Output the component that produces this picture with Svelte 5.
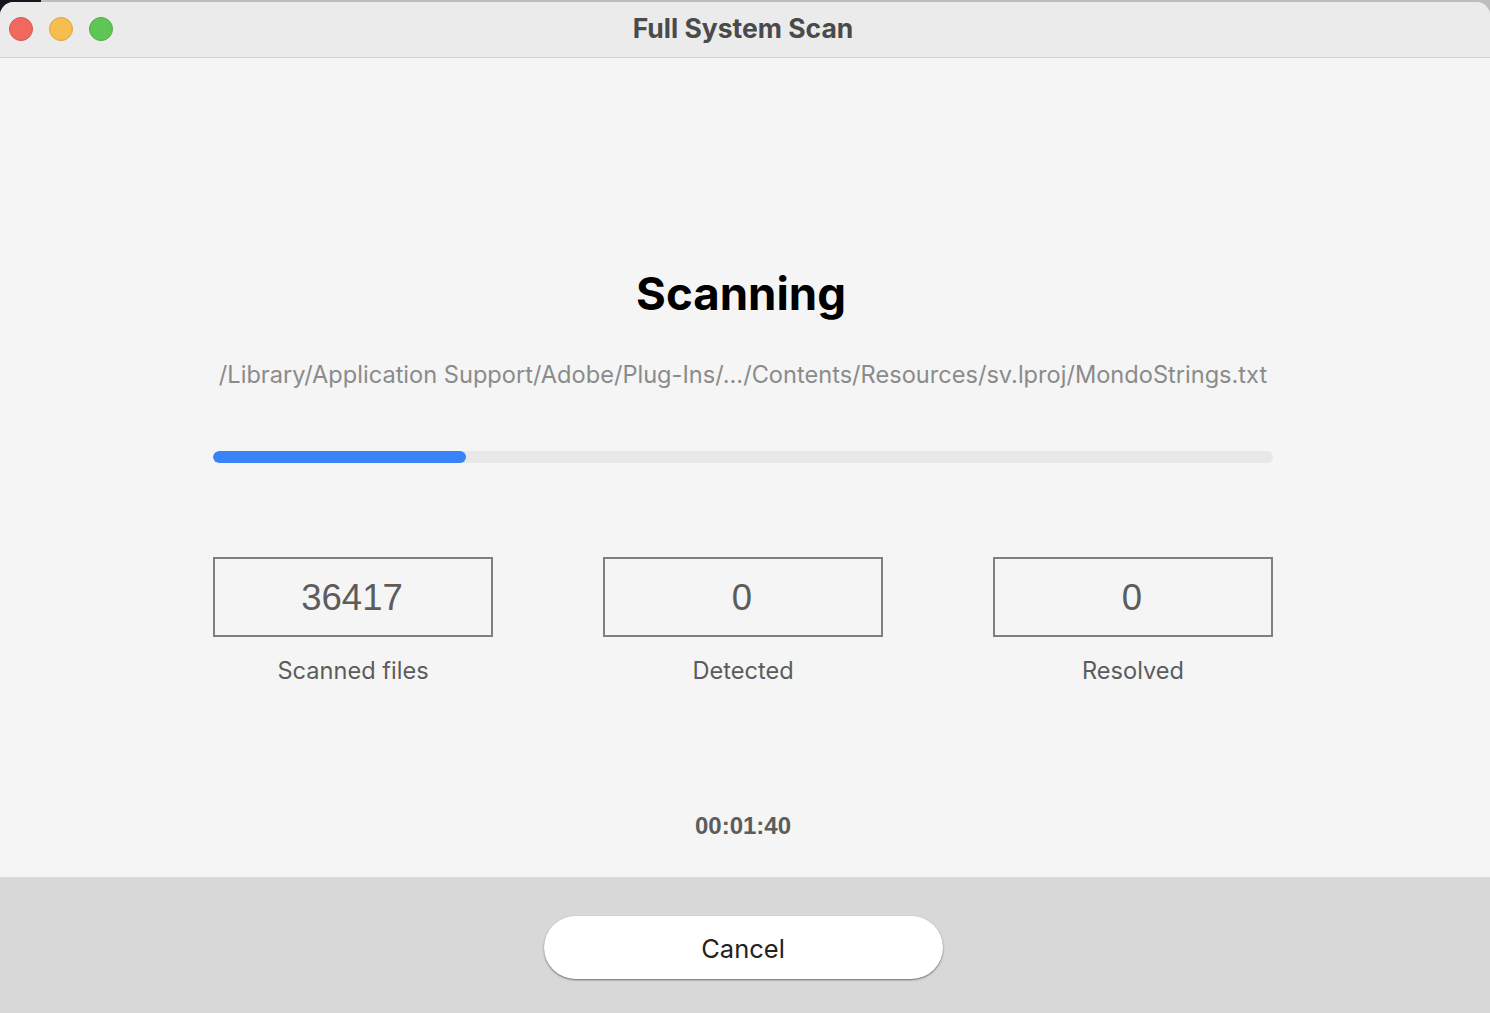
<script>
  let stats = [
    { value: 36417, label: "Scanned files" },
    { value: 0, label: "Detected" },
    { value: 0, label: "Resolved" }
  ];
  let progress = 253 / 1060;
</script>

<div class="desktop">
  <div class="window">
    <header class="titlebar">
      <div class="lights">
        <span class="light light--red"></span>
        <span class="light light--yellow"></span>
        <span class="light light--green"></span>
      </div>
      <h1 class="titlebar__title">Full System Scan</h1>
    </header>

    <main class="content">
      <h2 class="heading">Scanning</h2>
      <p class="path">/Library/Application Support/Adobe/Plug-Ins/.../Contents/Resources/sv.lproj/MondoStrings.txt</p>
      <div class="track">
        <div class="track__fill" style="width: {progress * 100}%"></div>
      </div>
      <div class="stats">
        {#each stats as stat}
          <div class="stat">
            <div class="stat__box">{stat.value}</div>
            <div class="stat__label">{stat.label}</div>
          </div>
        {/each}
      </div>
      <div class="timer">00:01:40</div>
    </main>

    <footer class="footer">
      <button class="cancel">Cancel</button>
    </footer>
  </div>
</div>

<style>
  :global(body) {
    font-family: "Inter", "Liberation Sans", sans-serif;
  }

  .desktop {
    height: 1013px;
    box-sizing: border-box;
    padding-top: 2px;
    overflow: hidden;
    background: linear-gradient(#14161f, #14161f) 0 0 / 41px 14px no-repeat, #bdbdbd;
  }

  .window {
    height: 100%;
    overflow: hidden;
    display: flex;
    flex-direction: column;
    background: #f5f5f5;
    border-radius: 14px 14px 0 0;
  }

  .titlebar {
    height: 56px;
    box-sizing: border-box;
    flex: none;
    display: flex;
    align-items: center;
    justify-content: center;
    position: relative;
    padding-right: 4px;
    background: #ebebeb;
    border-bottom: 1px solid #d2d2d2;
  }
  .titlebar__title {
    margin: 0 0 4px;
    font-size: 26.5px;
    font-weight: 700;
    color: #4a4a4a;
  }

  .lights {
    position: absolute;
    left: 9px;
    top: 15px;
    display: flex;
    gap: 16px;
  }
  .light {
    width: 24px;
    height: 24px;
    box-sizing: border-box;
    border-radius: 50%;
    border: 1px solid;
  }
  .light--red {
    background: #f0695f;
    border-color: #d5584f;
  }
  .light--yellow {
    background: #f6bd4f;
    border-color: #dea441;
  }
  .light--green {
    background: #5fc554;
    border-color: #51ab46;
  }

  .content {
    flex: 1;
    display: flex;
    flex-direction: column;
    align-items: center;
    padding-right: 4px;
  }

  .heading {
    margin: 208px 4px 0 0;
    font-size: 45.6px;
    line-height: 56px;
    font-weight: 700;
    color: #000;
  }
  .path {
    margin: 37px 0 0;
    font-size: 23.6px;
    line-height: 32px;
    color: #8b8b8b;
    white-space: nowrap;
  }

  .track {
    width: 1060px;
    height: 12px;
    margin-top: 60px;
    border-radius: 6px;
    background: #e8e8e8;
    overflow: hidden;
  }
  .track__fill {
    height: 100%;
    border-radius: 6px;
    background: #3a82f7;
  }

  .stats {
    width: 1060px;
    margin-top: 94px;
    display: flex;
    justify-content: space-between;
  }
  .stat {
    width: 280px;
  }
  .stat__box {
    height: 80px;
    box-sizing: border-box;
    display: flex;
    align-items: center;
    justify-content: center;
    padding: 2px 2px 0 0;
    border: 2px solid #7f7f7f;
    font-family: "Liberation Sans", sans-serif;
    font-size: 36.5px;
    color: #5c5c5c;
  }
  .stat__label {
    margin-top: 19px;
    font-size: 23.6px;
    line-height: 30px;
    text-align: center;
    color: #5c5c5c;
  }

  .timer {
    margin-top: 125px;
    font-family: "Liberation Sans", sans-serif;
    font-size: 24px;
    line-height: 30px;
    font-weight: 700;
    color: #5c5c5c;
  }

  .footer {
    height: 136px;
    flex: none;
    display: flex;
    justify-content: center;
    padding: 39px 4px 0 0;
    box-sizing: border-box;
    background: #d8d8d8;
  }
  .cancel {
    width: 399px;
    height: 63px;
    padding: 2px 0 0;
    border: none;
    border-radius: 32px;
    background: #fff;
    box-shadow: 0 1px 2px rgba(0, 0, 0, 0.5);
    font-family: inherit;
    font-size: 25.5px;
    color: #222;
  }
</style>
